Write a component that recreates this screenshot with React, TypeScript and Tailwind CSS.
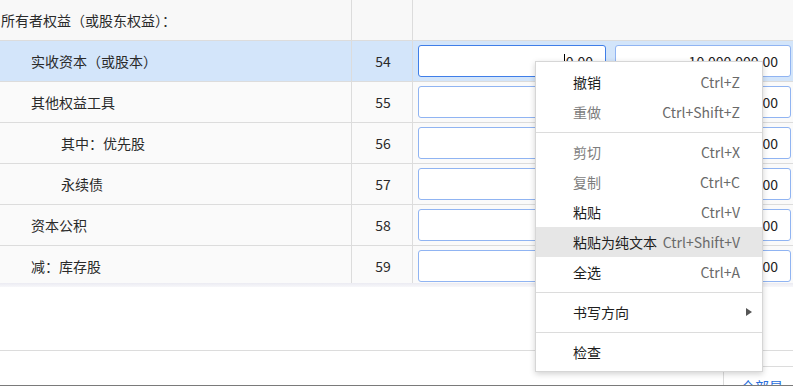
import { useState } from "react"

type Row = {
  label: string
  no?: number
  indent: number
  selected?: boolean
  v1?: string
  v2?: string
  head?: boolean
}

const rows: Row[] = [
  { label: "所有者权益（或股东权益）：", indent: 0, head: true },
  { label: "实收资本（或股本）", no: 54, indent: 1, selected: true, v1: "0.00", v2: "10,000,000.00" },
  { label: "其他权益工具", no: 55, indent: 1, v1: "", v2: "0.00" },
  { label: "其中：优先股", no: 56, indent: 2, v1: "", v2: "0.00" },
  { label: "永续债", no: 57, indent: 2, v1: "", v2: "0.00" },
  { label: "资本公积", no: 58, indent: 1, v1: "", v2: "0.00" },
  { label: "减：库存股", no: 59, indent: 1, v1: "", v2: "0.00" },
]

const menu = [
  { label: "撤销", key: "Ctrl+Z" },
  { label: "重做", key: "Ctrl+Shift+Z", disabled: true },
  { sep: true },
  { label: "剪切", key: "Ctrl+X", disabled: true },
  { label: "复制", key: "Ctrl+C", disabled: true },
  { label: "粘贴", key: "Ctrl+V" },
  { label: "粘贴为纯文本", key: "Ctrl+Shift+V", hover: true },
  { label: "全选", key: "Ctrl+A" },
  { sep: true },
  { label: "书写方向", arrow: true },
  { sep: true },
  { label: "检查" },
]

function Cell({ value, focused, caret }: { value?: string; focused?: boolean; caret?: boolean }) {
  return (
    <div
      className={`flex h-[32px] items-center justify-end rounded-[3px] border bg-white pr-[12px] text-[14px] text-[#222] ${
        focused ? "border-[#3f7ee8]" : "border-[#90b4f2]"
      }`}
    >
      {caret && <span className="mr-[1px] h-[15px] w-[1px] bg-black" />}
      {value}
    </div>
  )
}

function ContextMenu() {
  return (
    <div className="absolute left-[535px] top-[61px] w-[228px] border border-[#d6d6d6] bg-white pb-[4px] pt-[5px] shadow-[0_2px_6px_rgba(0,0,0,0.18)]">
      {menu.map((m, i) =>
        m.sep ? (
          <div key={i} className="flex h-[10px] items-center">
            <div className="h-[1px] w-full bg-[#dcdcdc]" />
          </div>
        ) : (
          <div
            key={i}
            className={`flex h-[30px] items-center justify-between pl-[37px] pr-[22px] text-[14px] ${
              m.hover ? "bg-[#e6e6e6]" : ""
            }`}
          >
            <span className={m.disabled ? "text-[#7d7d7d]" : "text-[#1e1e1e]"}>{m.label}</span>
            {m.key && <span className="text-[#6a6a6a]">{m.key}</span>}
            {m.arrow && (
              <svg width="6" height="8" viewBox="0 0 6 8" className="mr-[-12px]">
                <path d="M0 0 L6 4 L0 8 Z" fill="#555" />
              </svg>
            )}
          </div>
        )
      )}
    </div>
  )
}

export default function App() {
  const [active] = useState(1)

  return (
    <div
      className="relative h-[386px] w-[793px] overflow-hidden border-b border-[#7a7a7a] bg-white"
      style={{ fontFamily: '"Noto Sans CJK SC", "Noto Sans", sans-serif' }}
    >
      <div className="h-[283px] overflow-hidden">
        {rows.map((r, i) => (
          <div
            key={i}
            className={`grid h-[41px] grid-cols-[352px_61px_1fr] border-b border-[#dcdcdc] ${
              i === active ? "bg-[#d3e5fa]" : r.head ? "bg-[#f8f8f8]" : "bg-[#fafafa]"
            }`}
          >
            <div
              className={`flex items-center border-r border-[#dcdcdc] text-[14px] text-[#2a2a2a] ${
                r.indent === 0 ? "pl-[1px]" : r.indent === 1 ? "pl-[31px]" : "pl-[61px]"
              }`}
            >
              {r.label}
            </div>
            <div className="flex items-center justify-center border-r border-[#dcdcdc] pl-[2px] text-[14px] text-[#2a2a2a]">
              {r.no}
            </div>
            <div className="flex items-center gap-[9px] pl-[5px] pr-[2px]">
              {!r.head && (
                <>
                  <div className="w-[188px]">
                    <Cell value={r.v1} focused={i === active} caret={i === active} />
                  </div>
                  <div className="flex-1">
                    <Cell value={r.v2} />
                  </div>
                </>
              )}
            </div>
          </div>
        ))}
      </div>
      <div className="h-[4px] bg-gradient-to-b from-[#ebebf2] to-[#f7f7fa]" />
      <div className="h-[64px] border-b border-[#dcdcdc]" />
      <div className="flex h-[34px] justify-end">
        <div className="mt-[15px] w-[70px] border-l border-t border-[#dcdcdc] pl-[17px] pt-[9px] text-[14px] leading-[20px] text-[#2a6fdb]">
          全部显示
        </div>
      </div>
      <ContextMenu />
    </div>
  )
}
